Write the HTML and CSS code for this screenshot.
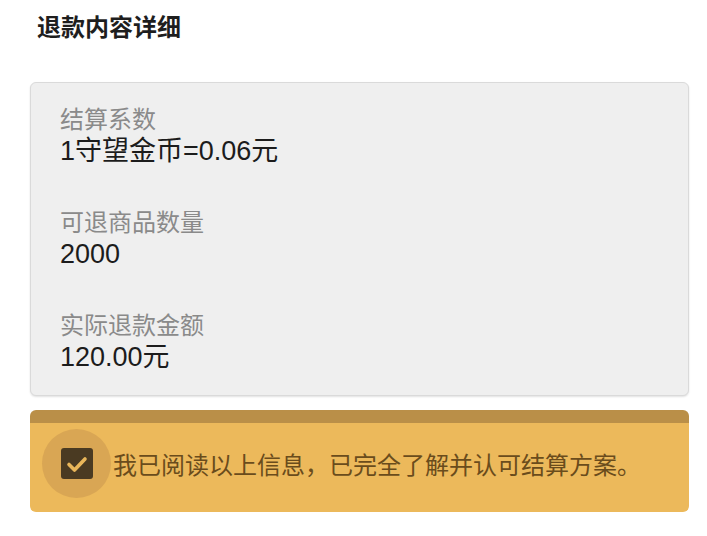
FILE: index.html
```html
<!DOCTYPE html>
<html lang="zh">
<head>
<meta charset="utf-8">
<link rel="stylesheet" href="styles.css">
</head>
<body>
<div class="page">
  <h1 class="title">退款内容详细</h1>
  <div class="details">
    <div class="item">
      <div class="label">结算系数</div>
      <div class="value">1守望金币=0.06元</div>
    </div>
    <div class="item">
      <div class="label">可退商品数量</div>
      <div class="value">2000</div>
    </div>
    <div class="item">
      <div class="label">实际退款金额</div>
      <div class="value">120.00元</div>
    </div>
  </div>
  <div class="agree">
    <div class="agree-body">
      <div class="check-ring">
        <span class="check-box">
          <svg width="32" height="32" viewBox="0 0 32 32"><path d="M8 16.5 L13.5 22 L24 11" fill="none" stroke="#e9b65a" stroke-width="3.6" stroke-linecap="round" stroke-linejoin="round"/></svg>
        </span>
      </div>
      <span class="agree-text">我已阅读以上信息，已完全了解并认可结算方案。</span>
    </div>
  </div>
</div>
</body>
</html>
```
FILE: styles.css
```css
html, body {
  margin: 0;
  padding: 0;
  background: #ffffff;
}
body {
  font-family: "Liberation Sans", "Noto Sans CJK SC", sans-serif;
}
.page {
  width: 707px;
  padding: 0 18px 0 30px;
  box-sizing: border-box;
}
.title {
  margin: 0;
  padding: 8px 0 0 7px;
  height: 82px;
  box-sizing: border-box;
  font-family: "Noto Sans CJK SC", sans-serif;
  font-size: 24px;
  line-height: 36px;
  font-weight: 700;
  color: #1e1e1e;
}
.details {
  background: #efefef;
  border: 1px solid #dadada;
  border-radius: 6px;
  box-shadow: 0 1px 2px rgba(0,0,0,0.12);
  padding: 19px 29px 20px;
  display: flex;
  flex-direction: column;
  gap: 37px;
  height: 314px;
  box-sizing: border-box;
}
.label {
  font-family: "Noto Sans CJK SC", sans-serif;
  font-size: 24px;
  line-height: 32px;
  color: #8a8a8a;
}
.value {
  font-size: 27px;
  line-height: 34px;
  color: #1c1c1c;
}
.agree {
  margin-top: 14px;
  background: #ecb95b;
  border-top: 13px solid #ba8f48;
  border-radius: 6px;
  height: 102px;
  box-sizing: border-box;
  overflow: hidden;
}
.agree-body {
  display: flex;
  align-items: center;
  gap: 2px;
  padding: 6px 0 0 12px;
}
.check-ring {
  width: 69px;
  height: 69px;
  border-radius: 50%;
  background: #d9a654;
  display: flex;
  align-items: center;
  justify-content: center;
}
.check-box {
  width: 32px;
  height: 31px;
  border-radius: 3px;
  background: #4a3a22;
  display: flex;
  align-items: center;
  justify-content: center;
}
.agree-text {
  font-family: "Noto Sans CJK SC", sans-serif;
  font-size: 24px;
  line-height: 32px;
  color: #6a4c1c;
}
```
